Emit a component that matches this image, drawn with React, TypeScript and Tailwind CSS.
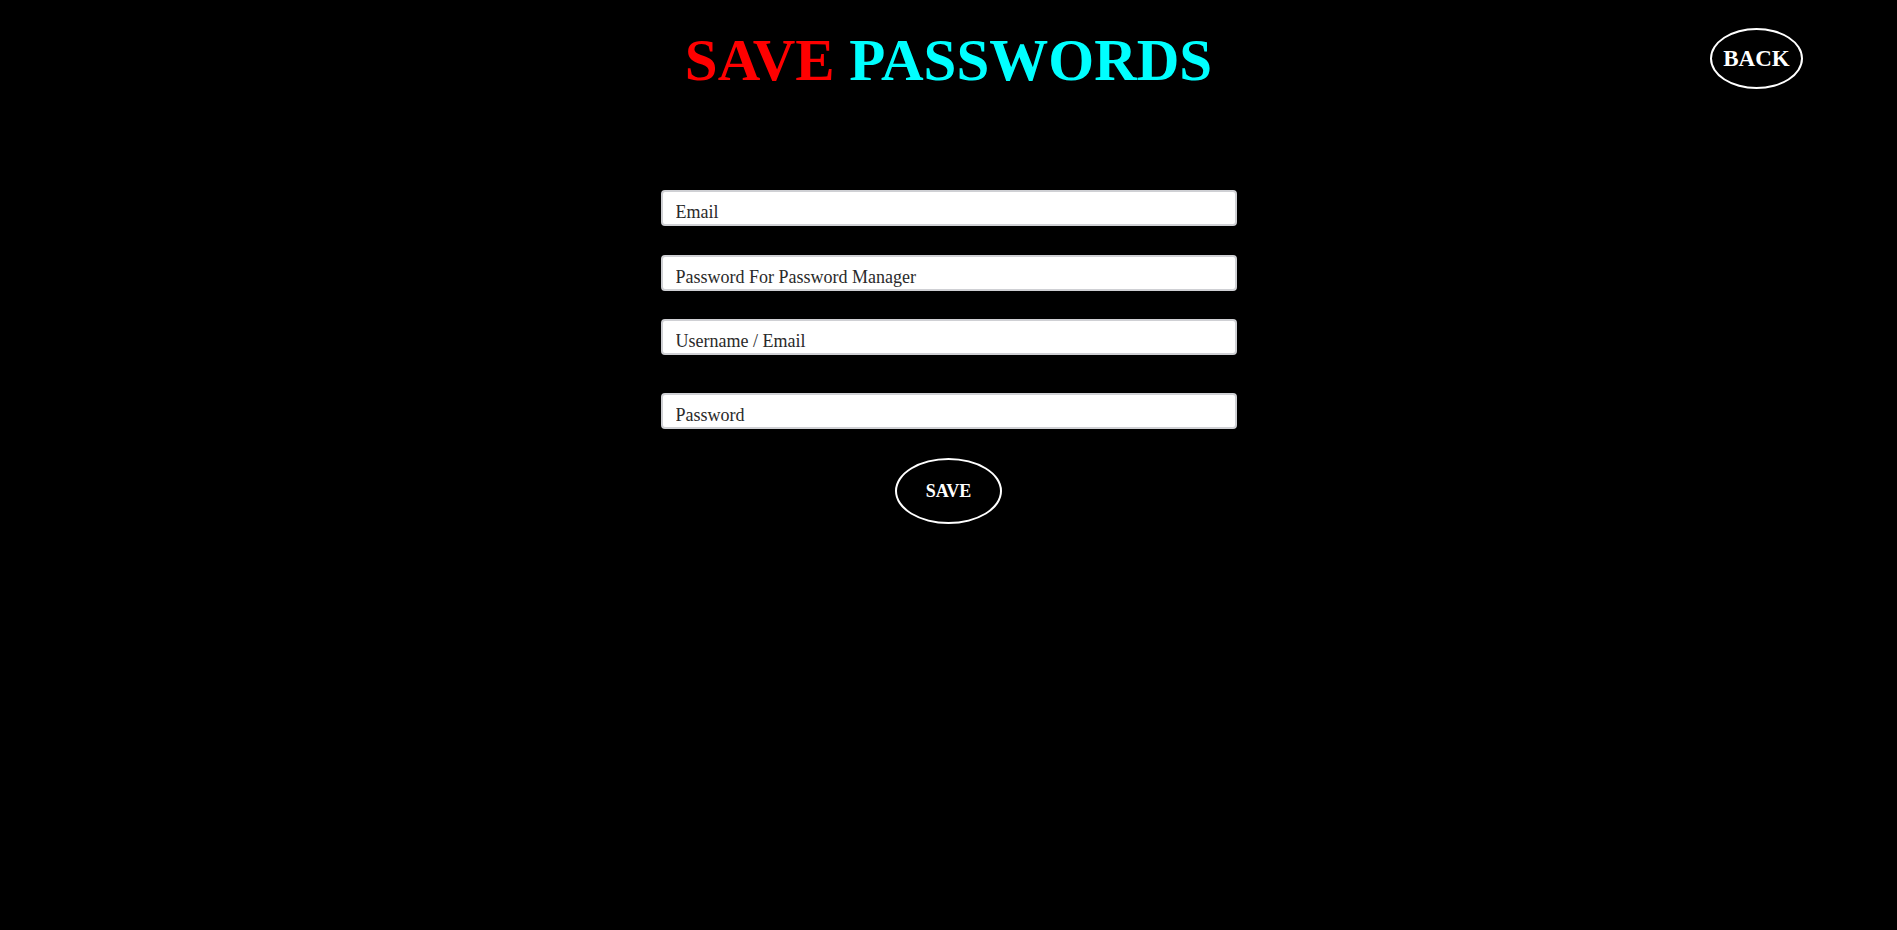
import React from 'react'

const fields = [
  { placeholder: 'Email', type: 'email', gap: 'mt-0' },
  { placeholder: 'Password For Password Manager', type: 'password', gap: 'mt-[29px]' },
  { placeholder: 'Username / Email', type: 'text', gap: 'mt-[28px]' },
  { placeholder: 'Password', type: 'password', gap: 'mt-[38px]' },
]

export default function App() {
  return (
    <div className="min-h-screen bg-black font-['Liberation_Serif',serif]">
      <header className="grid grid-cols-[1fr_auto_1fr] items-start pt-[27px]">
        <div />
        <h1 className="text-[59px] font-bold leading-[66px] whitespace-nowrap">
          <span className="text-[#ff0000]">SAVE</span>{' '}
          <span className="text-[#00ffff]">PASSWORDS</span>
        </h1>
        <div className="flex justify-end pr-[94px] mt-[1px]">
          <button
            type="button"
            className="w-[93px] h-[61px] rounded-[50%] border-2 border-white bg-transparent text-white text-[23px] font-bold leading-none flex items-center justify-center"
          >
            BACK
          </button>
        </div>
      </header>

      <form className="mx-auto mt-[97px] w-[576px] flex flex-col" onSubmit={(e) => e.preventDefault()}>
        {fields.map((f) => (
          <input
            key={f.placeholder}
            type={f.type}
            placeholder={f.placeholder}
            className={`${f.gap} h-[36px] w-full rounded-[4px] border-2 border-[#cfd0d4] bg-white pl-[13px] pr-3 pt-[10px] pb-[2px] text-[18px] text-[#222] placeholder:text-[#2a2a2a] outline-none`}
          />
        ))}
        <button
          type="submit"
          className="mt-[29px] self-center w-[107px] h-[66px] rounded-[50%] border-2 border-white bg-transparent text-white text-[18px] font-bold leading-none flex items-center justify-center"
        >
          SAVE
        </button>
      </form>
    </div>
  )
}
